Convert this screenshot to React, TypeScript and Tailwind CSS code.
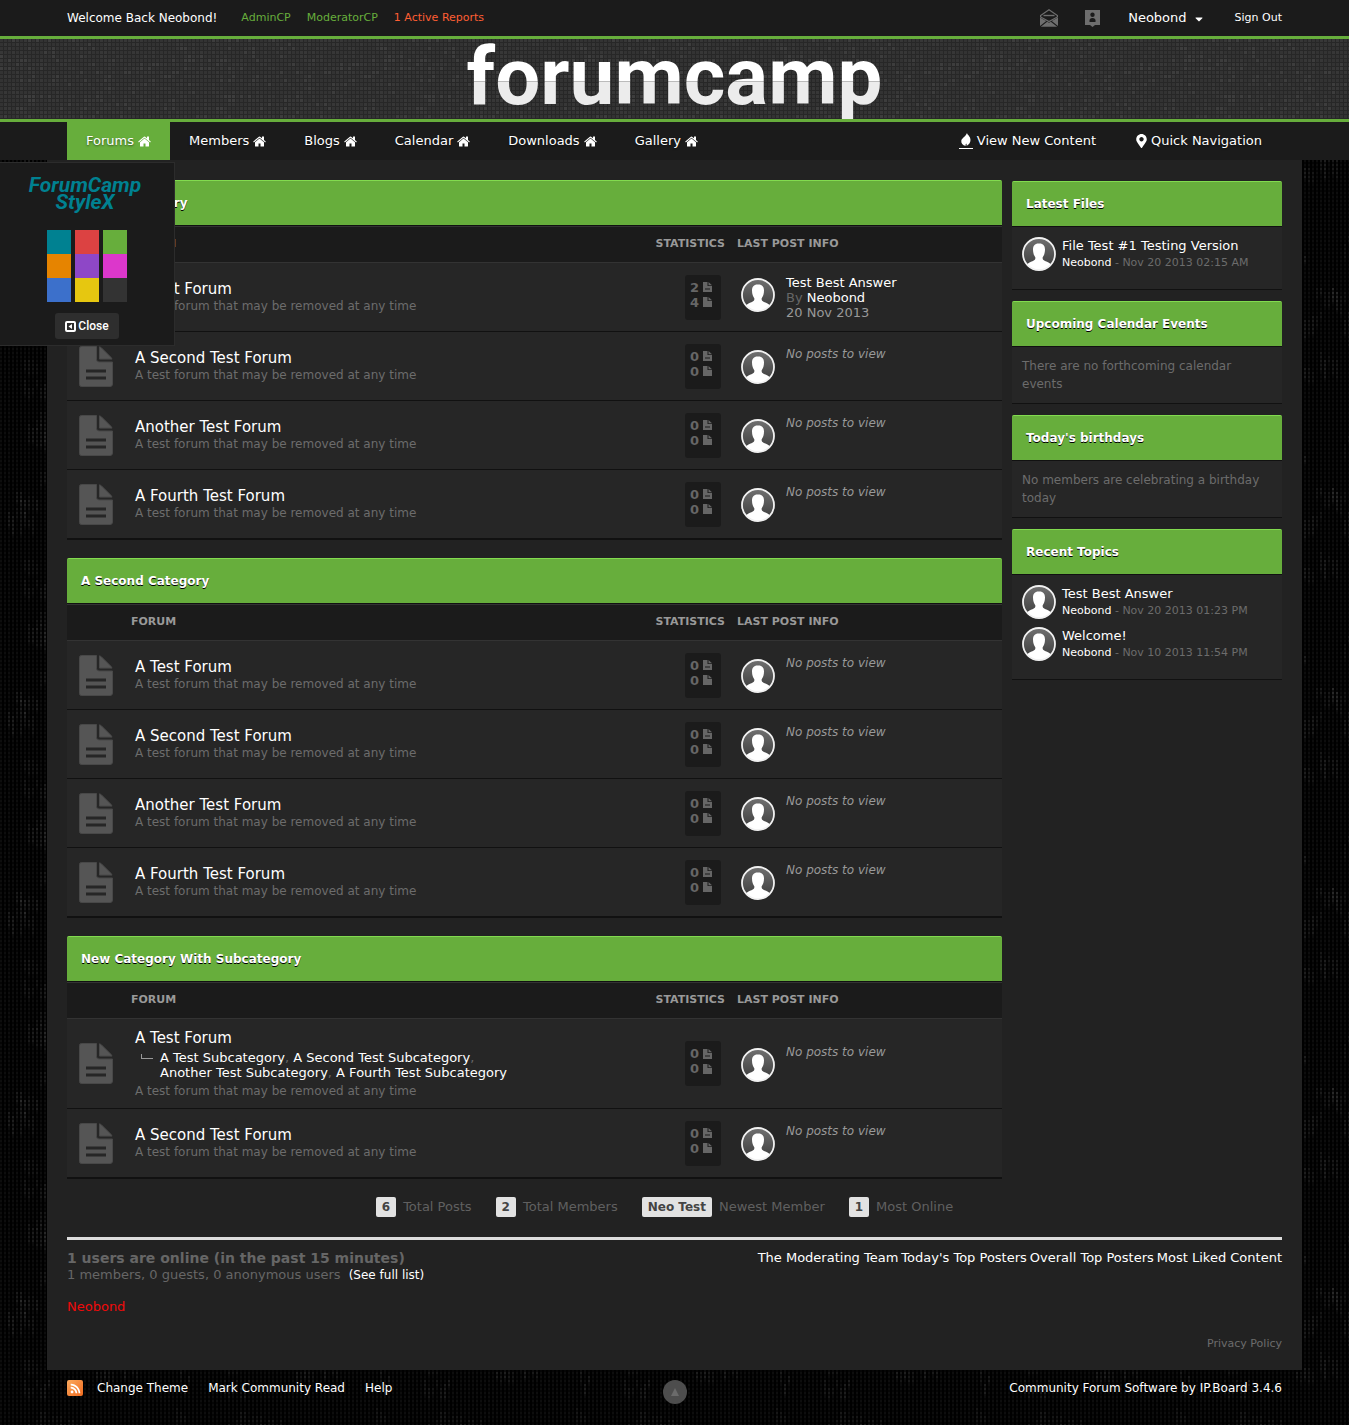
import React, { useState } from "react";
import { FaMapMarkerAlt, FaRss, FaCaretDown } from "react-icons/fa";

function noise(seed: number) {
  let s = seed;
  return () => {
    s = (s * 1103515245 + 12345) % 2147483648;
    return s / 2147483648;
  };
}

const headerCells = (() => {
  const r = noise(7);
  const cells: { x: number; y: number; o: number }[] = [];
  for (let y = 0; y < 20; y++)
    for (let x = 0; x < 50; x++) {
      const v = r();
      if (v > 0.62) cells.push({ x: x * 4, y: y * 4, o: v > 0.9 ? 0.05 : 0.02 });
    }
  return cells;
})();

const pageCells = (() => {
  const r = noise(21);
  const cells: { x: number; y: number; h: number; o: number }[] = [];
  for (let i = 0; i < 34; i++) {
    const cx = Math.floor(r() * 48) * 4;
    const cy = Math.floor(r() * 46) * 4;
    const n = 3 + Math.floor(r() * 5);
    for (let k = 0; k < n; k++)
      cells.push({ x: cx + k * 4, y: cy + Math.floor(r() * 3) * 4, h: 8 + Math.floor(r() * 4) * 4, o: 0.03 + r() * 0.04 });
  }
  return cells;
})();

function HeaderTexture() {
  return (
    <svg className="absolute inset-0 h-full w-full" aria-hidden="true">
      <defs>
        <pattern id="weave" width="200" height="80" patternUnits="userSpaceOnUse">
          <rect width="200" height="80" fill="#333333" />
          {headerCells.map((c, i) => (
            <rect key={i} x={c.x} y={c.y} width="3" height="3" fill="#fff" opacity={c.o} />
          ))}
          {Array.from({ length: 20 }, (_, i) => (
            <rect key={"h" + i} y={i * 4 + 3} width="200" height="1" fill="#272727" />
          ))}
          {Array.from({ length: 50 }, (_, i) => (
            <rect key={"v" + i} x={i * 4 + 3} width="1" height="80" fill="#272727" />
          ))}
        </pattern>
      </defs>
      <rect width="100%" height="100%" fill="url(#weave)" />
    </svg>
  );
}

function PageTexture() {
  return (
    <svg className="absolute inset-0 h-full w-full" aria-hidden="true">
      <defs>
        <pattern id="mesh" width="200" height="200" patternUnits="userSpaceOnUse">
          <rect width="200" height="200" fill="#000" />
          {Array.from({ length: 50 }, (_, i) => (
            <rect key={"v" + i} x={i * 4} width="2" height="200" fill="#0d0d0d" />
          ))}
          {pageCells.map((c, i) => (
            <rect key={i} x={c.x} y={c.y} width="2" height={c.h} fill="#fff" opacity={c.o} />
          ))}
          {Array.from({ length: 50 }, (_, i) => (
            <rect key={"h" + i} y={i * 4 + 2} width="200" height="2" fill="#000" opacity="0.6" />
          ))}
        </pattern>
      </defs>
      <rect width="100%" height="100%" fill="url(#mesh)" />
    </svg>
  );
}

function HomeIcon() {
  return (
    <svg viewBox="64 190 1664 1400" className="h-[11px] w-[13px]" fill="currentColor" aria-hidden="true">
      <path d="M1472 992v480q0 26-19 45t-45 19h-384v-384h-256v384h-384q-26 0-45-19t-19-45v-480q0-1 .5-3t.5-3l575-474 575 474q1 2 1 6zm223-69l-62 74q-8 9-21 11h-3q-13 0-21-7l-692-577-692 577q-12 8-24 7-13-2-21-11l-62-74q-8-10-7-23.500t11-21.500l719-599q32-26 76-26t76 26l244 204v-195q0-14 9-23t23-9h192q14 0 23 9t9 23v408l219 182q10 8 11 21.500t-7 23.500z" />
    </svg>
  );
}

function Avatar() {
  return (
    <svg viewBox="0 0 34 34" className="h-[34px] w-[34px] shrink-0" role="img" aria-label="Member photo">
      <defs>
        <linearGradient id="avatarShade" x1="0" y1="0" x2="0" y2="1">
          <stop offset="0" stopColor="#707070" />
          <stop offset="1" stopColor="#3a3a3a" />
        </linearGradient>
        <clipPath id="avatarClip">
          <circle cx="17" cy="17" r="16" />
        </clipPath>
      </defs>
      <circle cx="17" cy="17" r="16" fill="url(#avatarShade)" />
      <g clipPath="url(#avatarClip)" fill="#fff">
        <path d="M16.500 6.500c-3.800 0-5.500 2.500-5.500 6 0 3.300 1 6.200 2.300 7.800.3 1.800-.3 2.900-2.300 3.600C8.300 24.800 5.500 26 4 28.500l3 6h20l3-6c-1.500-2.500-4.300-3.700-7-4.600-2-.7-2.600-1.800-2.300-3.600 1.300-1.600 2.300-4.500 2.300-7.800 0-3.500-1.700-6-5.500-6z" />
      </g>
      <circle cx="17" cy="17" r="16" fill="none" stroke="#f1f1f1" strokeWidth="1.800" />
    </svg>
  );
}

function ForumIcon() {
  return (
    <svg viewBox="0 0 34 41" className="mx-auto h-[41px] w-[34px]" aria-hidden="true">
      <path d="M2.500.500H17.500V13.500a2.500 2.500 0 0 0 2.500 2.500H33.500V38a2.500 2.500 0 0 1-2.500 2.500H2.500A2 2 0 0 1 .5 38.500V2.500A2 2 0 0 1 2.500.500Z" fill="#555" stroke="#484848" />
      <path d="M20.500.800c.8.200 1.500.600 2 1.100l9.200 9.200c.6.600 1.100 1.300 1.300 2H20.500Z" fill="#555" stroke="#484848" />
      <path d="M7 25H27M7 32H27" stroke="#262626" strokeWidth="3" />
    </svg>
  );
}

function MiniFile({ line }: { line: boolean }) {
  return (
    <svg viewBox="0 0 9 10" className="h-[10px] w-[9px]" aria-hidden="true">
      <path d="M0 0H4.500V4H9V10H0Z" fill="#666" />
      <path d="M5.500 0L9 3.200H5.500Z" fill="#666" />
      {line && <path d="M2 7H7" stroke="#1b1b1b" strokeWidth="1" />}
    </svg>
  );
}

function MailIcon() {
  return (
    <svg viewBox="0 0 18 18" className="h-[18px] w-[18px]" aria-hidden="true">
      <path d="M9 .8L17.400 6.500V8L9 12.500.6 8V6.500Z" fill="none" stroke="#6e6e6e" strokeWidth="1.200" />
      <path d="M3.500 6.500H14.500" stroke="#6e6e6e" strokeWidth="1.400" />
      <path d="M0 8.500L6.300 12 0 17ZM18 8.500L11.700 12 18 17ZM.8 17.800L7.200 12.800 9 13.800 10.800 12.800 17.200 17.800Z" fill="#6e6e6e" />
    </svg>
  );
}

function NoticeIcon() {
  return (
    <svg viewBox="0 0 15 17" className="h-[17px] w-[15px]" aria-hidden="true">
      <path d="M0 0H15V15H10L7.500 17 5 15H0Z" fill="#6e6e6e" />
      <circle cx="7.500" cy="4.700" r="2.200" fill="#1b1b1b" />
      <path d="M4.500 12V10.500Q4.500 8 7.500 8T10.500 10.500V12Z" fill="#1b1b1b" />
    </svg>
  );
}

function FlameIcon() {
  return (
    <svg viewBox="0 0 14 16" className="h-4 w-[14px]" aria-hidden="true">
      <path d="M8 0C8.300 2 11.500 3.200 11.500 7c0 2.500-1.500 4.500-4 6 .3-1 .3-1.800-.4-2.600-.5 1-.7 1.700-.3 2.700C3.500 12 2 10 2.300 7.700 2.600 5 6.500 4 8 0Z" fill="#fff" />
      <path d="M0 15.500H14" stroke="#fff" />
    </svg>
  );
}

const navItems = ["Forums", "Members", "Blogs", "Calendar", "Downloads", "Gallery"];

function TopBar() {
  return (
    <div className="border-b-3 border-[#67ae3c] bg-[#1b1b1b]">
      <div className="mx-[67px] flex h-9 items-center justify-between text-[11px]">
        <div className="flex items-center gap-4">
          <span className="mr-2 text-[12px] text-white">Welcome Back Neobond!</span>
          <a href="#admin" className="text-[#67ae3c]">AdminCP</a>
          <a href="#mod" className="text-[#67ae3c]">ModeratorCP</a>
          <a href="#reports" className="text-[#ff5e33]">1 Active Reports</a>
        </div>
        <div className="flex items-center">
          <button type="button" aria-label="Messages" className="mr-[27px]"><MailIcon /></button>
          <button type="button" aria-label="Notifications" className="mr-7"><NoticeIcon /></button>
          <button type="button" className="mr-8 flex items-center gap-2 text-[13px] text-white">
            Neobond <FaCaretDown className="mt-0.5 h-3 w-2" />
          </button>
          <a href="#signout" className="text-white">Sign Out</a>
        </div>
      </div>
    </div>
  );
}

function Nav() {
  return (
    <nav className="bg-[#1b1b1b]">
      <div className="mx-[67px] flex h-[38px] justify-between text-[13px] text-white [text-shadow:0_1px_2px_rgba(0,0,0,0.5)]">
        <div className="flex">
          {navItems.map((n, i) => (
            <a key={n} href={"#" + n.toLowerCase()} className={i === 0 ? "flex items-center gap-1 bg-[#67ae3c] px-[19px]" : "flex items-center gap-1 px-[19px]"}>
              {n}
              <HomeIcon />
            </a>
          ))}
        </div>
        <div className="flex">
          <a href="#new" className="flex items-center gap-1 px-5"><FlameIcon />View New Content</a>
          <a href="#quick" className="flex items-center gap-1 px-5"><FaMapMarkerAlt className="h-[14px] w-[11px]" />Quick Navigation</a>
        </div>
      </div>
    </nav>
  );
}

type Forum = { name: string; subs?: string[]; topics: number; posts: number; last?: boolean };

function ForumRow({ f, tall }: { f: Forum; tall: boolean }) {
  return (
    <tr className={tall ? "h-[90px] bg-[#262626] [&>td]:border-b [&>td]:border-[#111]" : "h-[69px] bg-[#262626] [&>td]:border-b [&>td]:border-[#111]"}>
      <td><ForumIcon /></td>
      <td className="pl-[10px]">
        <h4 className="text-[15px] leading-[18px] text-white"><a href="#forum">{f.name}</a></h4>
        {f.subs && (
          <div className="my-[3px] flex max-w-[400px] leading-[15px]">
            <span className="mt-1 mr-[7px] ml-[6px] h-[5px] w-3 shrink-0 border-b border-l border-[#999]" />
            <p className="text-[13px] text-[#666]">
              {f.subs.map((s, i) => (
                <React.Fragment key={s}>
                  <a href="#sub" className="text-white">{s}</a>
                  {i < f.subs!.length - 1 && (i === 1 ? <>,<br /></> : ", ")}
                </React.Fragment>
              ))}
            </p>
          </div>
        )}
        <p className="leading-4 text-[#6c6c6c]">A test forum that may be removed at any time</p>
      </td>
      <td className="pr-[10px]">
        <div className="ml-auto w-9 rounded-[3px] bg-[#1b1b1b] px-[5px] pt-[5px] pb-[10px] text-[13px] leading-[15px] font-bold text-[#666]">
          <div className="flex items-center justify-between pr-1">{f.topics}<MiniFile line /></div>
          <div className="flex items-center justify-between pr-1">{f.posts}<MiniFile line={false} /></div>
        </div>
      </td>
      <td className="pl-[10px]">
        <div className="flex items-start gap-[11px] leading-[15px] text-[#999]">
          <span className="mt-[3px] mb-px"><Avatar /></span>
          {f.last ? (
            <div className="text-[13px]">
              <a href="#topic" className="block text-white">Test Best Answer</a>
              <p className="text-[#666]">By <a href="#user" className="text-white">Neobond</a></p>
              <p>20 Nov 2013</p>
            </div>
          ) : (
            <em>No posts to view</em>
          )}
        </div>
      </td>
    </tr>
  );
}

const four: Forum[] = ["A Test Forum", "A Second Test Forum", "Another Test Forum", "A Fourth Test Forum"].map((name) => ({ name, topics: 0, posts: 0 }));

const categories: { title: string; forums: Forum[] }[] = [
  { title: "A Test Category", forums: [{ name: "A Test Forum", topics: 2, posts: 4, last: true }, ...four.slice(1)] },
  { title: "A Second Category", forums: four },
  {
    title: "New Category With Subcategory",
    forums: [
      { name: "A Test Forum", topics: 0, posts: 0, subs: ["A Test Subcategory", "A Second Test Subcategory", "Another Test Subcategory", "A Fourth Test Subcategory"] },
      { name: "A Second Test Forum", topics: 0, posts: 0 },
    ],
  },
];

function BlockTitle({ children }: { children: React.ReactNode }) {
  return (
    <h3 className="flex h-[46px] items-center rounded-t-[2px] border-t border-b border-t-[#82db4f] border-b-[#111] bg-[#67ae3c] px-[14px] text-[12px] font-bold text-white [text-shadow:0_1px_0_#000]">
      {children}
    </h3>
  );
}

function Category({ title, forums }: { title: string; forums: Forum[] }) {
  return (
    <section className="mb-[18px]">
      <BlockTitle>{title}</BlockTitle>
      <table className="w-full table-fixed border-separate border-spacing-0 border-b border-[#111]">
        <colgroup>
          <col className="w-[58px]" />
          <col />
          <col className="w-[110px]" />
          <col className="w-[271px]" />
        </colgroup>
        <thead>
          <tr className="h-[37px] bg-[#1b1b1b] text-left text-[11px] text-[#999] [&>*]:border-t [&>*]:border-b [&>*]:border-[#333]">
            <td />
            <th scope="col" className="pl-[6px]">FORUM</th>
            <th scope="col" className="pr-[6px] text-right">STATISTICS</th>
            <th scope="col" className="pl-[6px]">LAST POST INFO</th>
          </tr>
        </thead>
        <tbody>
          {forums.map((f) => (
            <ForumRow key={f.name} f={f} tall={!!f.subs} />
          ))}
        </tbody>
      </table>
    </section>
  );
}

function SideBlock({ title, children }: { title: string; children: React.ReactNode }) {
  return (
    <section className="mb-[11px] border-b border-[#111] bg-[#262626]">
      <BlockTitle>{title}</BlockTitle>
      <div className="p-[10px] text-[12px] leading-[18px] text-[#6c6c6c]">{children}</div>
    </section>
  );
}

function SideItem({ title, date }: { title: string; date: string }) {
  return (
    <div className="flex h-[42px] gap-[6px] leading-[17px]">
      <Avatar />
      <div>
        <a href="#item" className="block text-[13px] text-white">{title}</a>
        <p className="text-[11px]"><a href="#user" className="text-white">Neobond</a> - {date}</p>
      </div>
    </div>
  );
}

const stats = [
  ["6", "Total Posts"],
  ["2", "Total Members"],
  ["Neo Test", "Newest Member"],
  ["1", "Most Online"],
];

const swatches = [
  { name: "Teal", cls: "bg-[#008191]" },
  { name: "Red", cls: "bg-[#dc4242]" },
  { name: "Green", cls: "bg-[#67ae3c]" },
  { name: "Orange", cls: "bg-[#e68400]" },
  { name: "Purple", cls: "bg-[#8e47c7]" },
  { name: "Pink", cls: "bg-[#dc37cb]" },
  { name: "Blue", cls: "bg-[#3c70cb]" },
  { name: "Yellow", cls: "bg-[#e6c710]" },
  { name: "Dark", cls: "bg-[#333333]" },
];

function StylePanel({ onClose }: { onClose: () => void }) {
  return (
    <aside className="absolute top-[162px] left-0 z-10 flex w-[175px] flex-col items-center border border-l-0 border-[#2c2c2c] bg-[#1b1b1b] pt-[14px] pb-[6px] font-['Roboto',sans-serif]">
      <h2 className="pr-1 text-center text-[21px] leading-[17px] font-bold text-[#008191] italic">ForumCamp<br />StyleX</h2>
      <div className="mt-[19px] grid grid-cols-3 gap-x-1">
        {swatches.map((s) => (
          <button key={s.name} type="button" aria-label={s.name} className={"h-6 w-6 " + s.cls} />
        ))}
      </div>
      <button type="button" onClick={onClose} className="mt-[11px] flex h-[26px] items-center gap-[2px] rounded-[3px] bg-[#2e2e2e] px-[10px] text-[12px] font-medium text-white">
        <svg viewBox="0 0 11 11" className="h-[11px] w-[11px]" aria-hidden="true">
          <rect x="1" y="1" width="9" height="9" rx="1" fill="none" stroke="#fff" strokeWidth="2" />
          <path d="M7 3V8L3.500 5.500Z" fill="#fff" />
        </svg>
        Close
      </button>
    </aside>
  );
}

export default function App() {
  const [panel, setPanel] = useState(true);
  return (
    <div className="relative min-h-screen bg-black font-['DejaVu_Sans',Verdana,sans-serif] text-[12px]">
      <PageTexture />
      <div className="relative">
        <TopBar />
        <header className="relative flex h-[83px] justify-center border-b-3 border-[#67ae3c]">
          <HeaderTexture />
          <h1 className="relative bg-[linear-gradient(to_bottom,#fff_42px,#bbb_42px,#bbb_43px,#ececec_43px)] bg-clip-text pb-1 font-['Roboto',sans-serif] text-[80px] leading-[76px] font-bold text-transparent">
            forumcamp
          </h1>
        </header>
        <Nav />
        {panel && <StylePanel onClose={() => setPanel(false)} />}
        <main className="mx-[47px] bg-[#222] px-5 pt-5 pb-[18px]">
          <div className="flex gap-[10px]">
            <div className="min-w-0 flex-1">
              {categories.map((c) => (
                <Category key={c.title} title={c.title} forums={c.forums} />
              ))}
            </div>
            <div className="mt-px w-[270px] shrink-0">
              <SideBlock title="Latest Files">
                <SideItem title="File Test #1 Testing Version" date="Nov 20 2013 02:15 AM" />
              </SideBlock>
              <SideBlock title="Upcoming Calendar Events">There are no forthcoming calendar events</SideBlock>
              <SideBlock title="Today's birthdays">No members are celebrating a birthday today</SideBlock>
              <SideBlock title="Recent Topics">
                <SideItem title="Test Best Answer" date="Nov 20 2013 01:23 PM" />
                <SideItem title="Welcome!" date="Nov 10 2013 11:54 PM" />
              </SideBlock>
            </div>
          </div>
          <ul className="flex justify-center gap-6 border-b-3 border-[#ddd] pr-5 pb-5 text-[13px] text-[#606060]">
            {stats.map(([v, l]) => (
              <li key={l} className="flex items-center gap-[7px]">
                <span className="rounded-[2px] bg-[#e2e2e2] px-[6px] text-[12px] leading-5 font-bold text-[#444]">{v}</span>
                {l}
              </li>
            ))}
          </ul>
          <div className="flex items-start justify-between pt-[10px] text-[13px]">
            <div className="leading-4 text-[#666]">
              <h4 className="text-[14px] leading-[17px] font-bold">1 users are online (in the past 15 minutes)</h4>
              <p>1 members, 0 guests, 0 anonymous users <a href="#list" className="ml-1 text-[12px] text-white">(See full list)</a></p>
              <p className="mt-4"><a href="#user" className="text-[#f00a0a]">Neobond</a></p>
            </div>
            <div className="flex gap-[3px] leading-4 text-white">
              <a href="#team">The Moderating Team</a>
              <a href="#today">Today's Top Posters</a>
              <a href="#overall">Overall Top Posters</a>
              <a href="#liked">Most Liked Content</a>
            </div>
          </div>
          <p className="mt-[21px] text-right text-[11px] leading-4"><a href="#privacy" className="text-[#6c6c6c]">Privacy Policy</a></p>
        </main>
        <footer className="mx-[67px] grid grid-cols-[1fr_auto_1fr] items-start pt-[10px] text-[12px] leading-4 text-white">
          <div className="flex items-center gap-5">
            <a href="#rss" aria-label="RSS" className="-mr-[6px] flex h-4 w-4 items-center justify-center rounded-[2px] bg-[linear-gradient(135deg,#fbab60,#f06a1d)]"><FaRss className="h-[11px] w-[11px]" /></a>
            <a href="#theme">Change Theme</a>
            <a href="#mark">Mark Community Read</a>
            <a href="#help">Help</a>
          </div>
          <a href="#top" aria-label="Back to top" className="flex h-6 w-6 items-center justify-center rounded-full bg-[#4d4d4d]">
            <svg viewBox="0 0 8 8" className="h-2 w-2" aria-hidden="true"><path d="M4 0L8 8H0Z" fill="#6b6b6b" /></svg>
          </a>
          <a href="#ipboard" className="justify-self-end">Community Forum Software by IP.Board 3.4.6</a>
        </footer>
      </div>
    </div>
  );
}
